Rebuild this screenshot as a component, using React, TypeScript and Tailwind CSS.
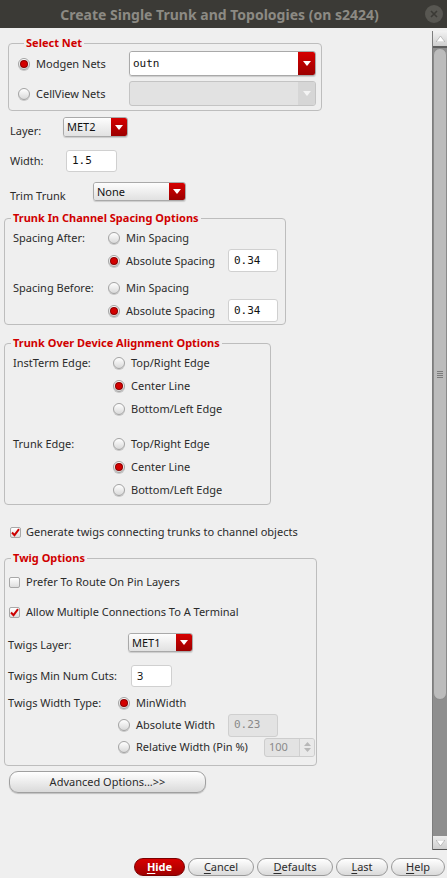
import type { ReactNode } from "react";

const txt = "text-[11px] leading-[14px] text-[#2b2b2b]";

function Radio({ on }: { on?: boolean }) {
  return (
    <span className="flex h-[12px] w-[12px] shrink-0 items-center justify-center rounded-full border border-[#a3a3a3] bg-gradient-to-b from-white to-[#d9d9d9] shadow-[0_1px_0_#c8c8c8]">
      {on ? <span className="h-[6px] w-[6px] rounded-full bg-[#d40000] shadow-[0_0_0_1px_#8a0000]" /> : null}
    </span>
  );
}

function Check({ on }: { on?: boolean }) {
  return (
    <span className="flex h-[11px] w-[11px] shrink-0 items-center justify-center rounded-[2px] border border-[#a8a8a8] bg-gradient-to-b from-white to-[#dedede]">
      {on ? (
        <svg width="9" height="9" viewBox="0 0 9 9">
          <path d="M1 4.5 L3.5 7.2 L8 1.2" fill="none" stroke="#cc0000" strokeWidth="2" />
        </svg>
      ) : null}
    </span>
  );
}

function Arrow({ color = "white" }: { color?: string }) {
  return (
    <svg width="8" height="5" viewBox="0 0 8 5">
      <path d="M0 0 L8 0 L4 5 Z" fill={color} />
    </svg>
  );
}

function Combo({
  value,
  w,
  h,
  btn = 16,
  mono,
  white,
}: {
  value: string;
  w: number;
  h: number;
  btn?: number;
  mono?: boolean;
  white?: boolean;
}) {
  return (
    <div
      className="flex shrink-0 overflow-hidden rounded-[3px] border border-[#a9a9a9] shadow-[0_1px_1px_rgba(0,0,0,0.15)]"
      style={{ width: w, height: h }}
    >
      <div
        className={
          "flex flex-1 items-center pl-[3px] " +
          (white ? "bg-white " : "bg-gradient-to-b from-[#fdfdfd] to-[#e1e1e1] ") +
          (mono
            ? "font-['DejaVu_Sans_Mono',monospace] text-[11px] text-[#111]"
            : "text-[11px] text-[#111]")
        }
      >
        {value}
      </div>
      <div
        className="flex items-center justify-center bg-gradient-to-b from-[#d60000] to-[#9c0000]"
        style={{ width: btn }}
      >
        <Arrow />
      </div>
    </div>
  );
}

function Field({
  value,
  w,
  h,
  mono = true,
  disabled,
}: {
  value: string;
  w: number;
  h: number;
  mono?: boolean;
  disabled?: boolean;
}) {
  return (
    <div
      className={
        "flex shrink-0 items-center rounded-[3px] border pl-[5px] text-[11px] " +
        (disabled
          ? "border-[#cfcfcf] bg-[#e3e3e3] text-[#8a8a8a] "
          : "border-[#d0d0d0] bg-white text-[#111] ") +
        (mono ? "font-['DejaVu_Sans_Mono',monospace]" : "")
      }
      style={{ width: w, height: h }}
    >
      {value}
    </div>
  );
}

function Group({
  title,
  className,
  children,
}: {
  title: string;
  className: string;
  children: ReactNode;
}) {
  return (
    <fieldset className={"rounded-[4px] border border-[#bdbdbd] " + className}>
      <legend className="ml-[6px] px-[2px] text-[11px] font-bold leading-[14px] text-[#d00000]">
        {title}
      </legend>
      {children}
    </fieldset>
  );
}

function Btn({
  w,
  children,
  red,
}: {
  w: number;
  children: ReactNode;
  red?: boolean;
}) {
  return (
    <div
      className={
        "flex h-[18px] items-center justify-center rounded-[9px] border text-[11px] " +
        (red
          ? "border-[#7a0000] bg-gradient-to-b from-[#d80000] to-[#a00000] font-bold text-white"
          : "border-[#9a9a9a] bg-gradient-to-b from-white to-[#dadada] text-[#2b2b2b]")
      }
      style={{ width: w }}
    >
      {children}
    </div>
  );
}

export default function App() {
  return (
    <div className="flex h-[878px] w-[447px] flex-col overflow-hidden bg-[#efefef] font-['Noto_Sans',sans-serif]">
      {/* title bar */}
      <div className="flex h-[28px] shrink-0 items-center bg-[#3b3a36]">
        <div className="flex-1 pl-[14px] text-center text-[14px] font-bold text-[#8c8a84]">
          Create Single Trunk and Topologies (on s2424)
        </div>
        <div className="mr-[4px] flex h-[18px] w-[18px] items-center justify-center rounded-full bg-[#585752]">
          <svg width="8" height="8" viewBox="0 0 8 8">
            <path d="M1 1 L7 7 M7 1 L1 7" stroke="#3b3a36" strokeWidth="1.6" />
          </svg>
        </div>
      </div>

      <div className="flex h-[822px] shrink-0">
        <div className={"w-[432px] overflow-hidden " + txt}>
          {/* select net */}
          <Group title="Select Net" className="ml-[8px] mt-[8px] w-[314px] pb-[4px] pl-[9px] pr-[5px]">
            <div className="mt-[1px] flex h-[25px] items-center">
              <Radio on />
              <span className="ml-[6px]">Modgen Nets</span>
              <div className="ml-auto">
                <Combo value="outn" w={187} h={25} btn={17} mono white />
              </div>
            </div>
            <div className="mt-[5px] flex h-[25px] items-center">
              <Radio />
              <span className="ml-[6px]">CellView Nets</span>
              <div className="ml-auto flex h-[25px] w-[187px] overflow-hidden rounded-[3px] border border-[#c4c4c4] bg-[#e2e2e2]">
                <div className="flex-1" />
                <div className="flex w-[17px] items-center justify-center bg-[#d6d6d6]">
                  <Arrow color="#f4f4f4" />
                </div>
              </div>
            </div>
          </Group>

          <div className="mt-[6px] flex h-[20px] items-start pl-[10px]">
            <span className="mt-[7px] w-[53px]">Layer:</span>
            <Combo value="MET2" w={65} h={20} />
          </div>

          <div className="mt-[13px] flex items-center pl-[10px]">
            <span className="w-[56px]">Width:</span>
            <Field value="1.5" w={51} h={22} />
          </div>

          <div className="mt-[10px] flex h-[19px] items-start pl-[10px]">
            <span className="mt-[7px] w-[83px]">Trim Trunk</span>
            <Combo value="None" w={93} h={19} />
          </div>

          {/* channel spacing */}
          <Group title="Trunk In Channel Spacing Options" className="ml-[4px] mt-[10px] w-[282px] pb-[2px] pt-[1px]">
            {[
              ["Spacing After:", false],
              ["", true],
              ["Spacing Before:", false],
              ["", true],
            ].map(([label, abs], i) => (
              <div
                key={i}
                className={"flex h-[23px] items-center pl-[8px] " + (i === 2 ? "mt-[4px]" : "")}
              >
                <span className="w-[95px]">{label as string}</span>
                <Radio on={abs as boolean} />
                <span className="ml-[6px] w-[102px]">{abs ? "Absolute Spacing" : "Min Spacing"}</span>
                {abs ? <Field value="0.34" w={50} h={23} /> : null}
              </div>
            ))}
          </Group>

          {/* device alignment */}
          <Group title="Trunk Over Device Alignment Options" className="ml-[4px] mt-[11px] w-[267px] pb-[3px] pt-[1px]">
            {["InstTerm Edge:", "Trunk Edge:"].map((label, g) => (
              <div key={label} className={g === 1 ? "mt-[12px]" : ""}>
                {["Top/Right Edge", "Center Line", "Bottom/Left Edge"].map((opt, i) => (
                  <div key={opt} className="flex h-[23px] items-center pl-[8px]">
                    <span className="w-[100px]">{i === 0 ? label : ""}</span>
                    <Radio on={i === 1} />
                    <span className="ml-[6px]">{opt}</span>
                  </div>
                ))}
              </div>
            ))}
          </Group>

          <div className="mt-[19px] flex h-[16px] items-center pl-[10px]">
            <Check on />
            <span className="ml-[5px]">Generate twigs connecting trunks to channel objects</span>
          </div>

          {/* twig options */}
          <Group title="Twig Options" className="ml-[4px] mt-[11px] w-[313px] pb-[7px]">
            <div className="mt-[9px] flex h-[16px] items-center pl-[4px]">
              <Check />
              <span className="ml-[6px]">Prefer To Route On Pin Layers</span>
            </div>
            <div className="mt-[14px] flex h-[16px] items-center pl-[4px]">
              <Check on />
              <span className="ml-[6px]">Allow Multiple Connections To A Terminal</span>
            </div>
            <div className="mt-[13px] flex h-[19px] items-start pl-[3px]">
              <span className="mt-[5px] w-[120px]">Twigs Layer:</span>
              <Combo value="MET1" w={65} h={19} />
            </div>
            <div className="mt-[13px] flex items-center pl-[3px]">
              <span className="w-[123px]">Twigs Min Num Cuts:</span>
              <Field value="3" w={41} h={22} mono={false} />
            </div>
            <div className="mt-[5px] flex h-[22px] items-center pl-[3px]">
              <span className="w-[110px]">Twigs Width Type:</span>
              <Radio on />
              <span className="ml-[6px]">MinWidth</span>
            </div>
            <div className="flex h-[22px] items-center pl-[113px]">
              <Radio />
              <span className="ml-[6px] w-[92px]">Absolute Width</span>
              <Field value="0.23" w={50} h={23} disabled />
            </div>
            <div className="flex h-[22px] items-center pl-[113px]">
              <Radio />
              <span className="ml-[6px] w-[128px]">Relative Width (Pin %)</span>
              <div className="flex h-[19px] w-[51px] overflow-hidden rounded-[3px] border border-[#cdcdcd] bg-[#e3e3e3]">
                <span className="flex flex-1 items-center pl-[4px] text-[11px] text-[#8a8a8a]">100</span>
                <div className="flex w-[15px] flex-col items-center justify-center gap-[2px] border-l border-[#d0d0d0] bg-[#e9e9e9]">
                  <svg width="7" height="4" viewBox="0 0 7 4">
                    <path d="M0 4 L7 4 L3.5 0 Z" fill="#b8b8b8" />
                  </svg>
                  <svg width="7" height="4" viewBox="0 0 7 4">
                    <path d="M0 0 L7 0 L3.5 4 Z" fill="#b8b8b8" />
                  </svg>
                </div>
              </div>
            </div>
          </Group>

          <div className="ml-[9px] mt-[5px] flex h-[22px] w-[197px] items-center justify-center rounded-[9px] border border-[#a0a0a0] bg-gradient-to-b from-white to-[#dadada] shadow-[0_1px_1px_rgba(0,0,0,0.2)]">
            Advanced Options...&gt;&gt;
          </div>
        </div>

        {/* scrollbar */}
        <div className="mt-[3px] flex w-[15px] flex-col border-l border-[#7d7d7d] bg-[#8e8e8e]">
          <div className="flex h-[17px] shrink-0 items-center justify-center border-b-2 border-[#5e5e5e] bg-gradient-to-b from-[#f2f2f2] to-[#cfcfcf]">
            <svg width="9" height="6" viewBox="0 0 9 6">
              <path d="M0 6 L9 6 L4.5 0 Z" fill="#ffffff" stroke="#a0a0a0" strokeWidth="0.6" />
            </svg>
          </div>
          <div className="flex h-[652px] shrink-0 flex-col items-center justify-center rounded-b-[7px] rounded-t-[7px] border border-[#8a8a8a] bg-[#bcbcbc]">
            <div className="flex flex-col gap-[1px]">
              {[0, 1, 2, 3].map((i) => (
                <span key={i} className="h-[1px] w-[6px] bg-[#7c7c7c]" />
              ))}
            </div>
          </div>
          <div className="flex-1" />
          <div className="flex h-[14px] shrink-0 items-center justify-center border-b border-[#555] bg-gradient-to-b from-[#ececec] to-[#cfcfcf]">
            <svg width="9" height="6" viewBox="0 0 9 6">
              <path d="M0 0 L9 0 L4.5 6 Z" fill="#ffffff" stroke="#a0a0a0" strokeWidth="0.6" />
            </svg>
          </div>
        </div>
      </div>

      {/* button bar */}
      <div className="flex h-[28px] shrink-0 items-start justify-end gap-[3px] pr-[2px] pt-[8px]">
        <Btn w={51} red>
          <span className="underline underline-offset-2">H</span>ide
        </Btn>
        <Btn w={66}>
          <span className="underline underline-offset-2">C</span>ancel
        </Btn>
        <Btn w={76}>
          <span className="underline underline-offset-2">D</span>efaults
        </Btn>
        <Btn w={52}>
          <span className="underline underline-offset-2">L</span>ast
        </Btn>
        <Btn w={54}>
          <span className="underline underline-offset-2">H</span>elp
        </Btn>
      </div>
    </div>
  );
}
